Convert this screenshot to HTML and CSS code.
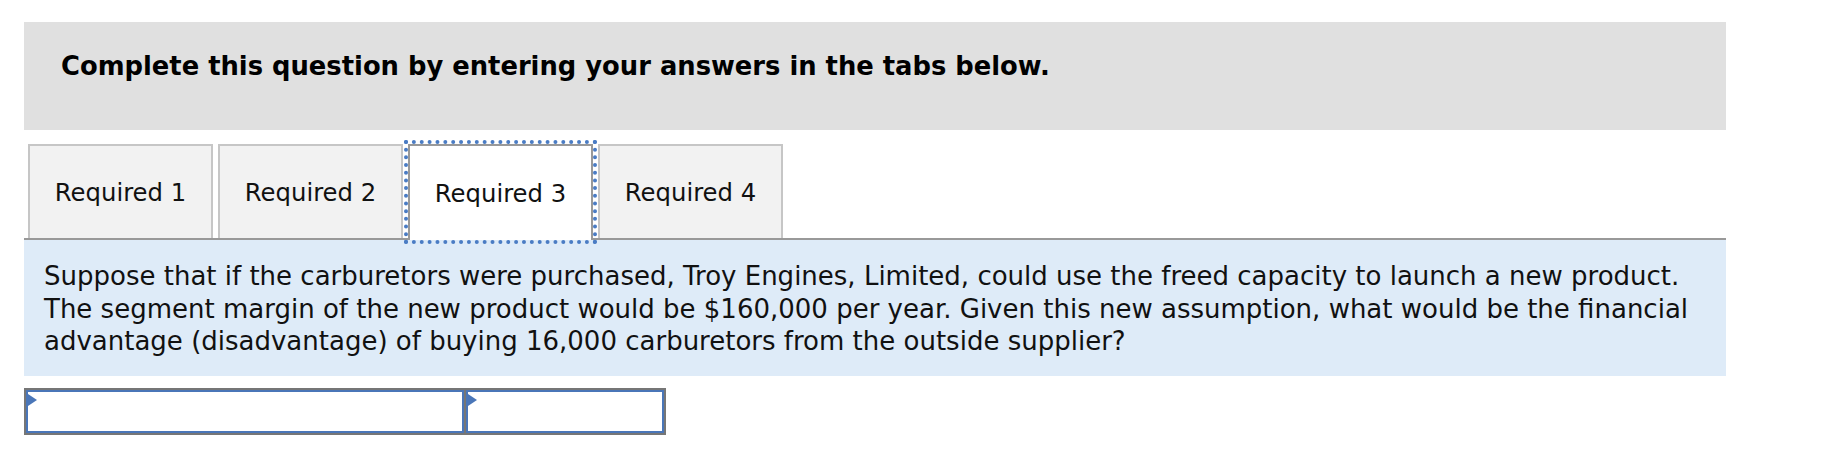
FILE: index.html
```html
<!DOCTYPE html>
<html>
<head>
<meta charset="utf-8">
<link rel="stylesheet" href="styles.css">
</head>
<body>
<div class="page">
  <div class="banner">Complete this question by entering your answers in the tabs below.</div>
  <div class="tabs">
    <div class="tab">Required 1</div>
    <div class="tab">Required 2</div>
    <div class="tab active">Required 3</div>
    <div class="tab">Required 4</div>
  </div>
  <div class="question">Suppose that if the carburetors were purchased, Troy Engines, Limited, could use the freed capacity to launch a new product. The segment margin of the new product would be $160,000 per year. Given this new assumption, what would be the financial advantage (disadvantage) of buying 16,000 carburetors from the outside supplier?</div>
  <div class="answer">
    <div class="cell wide"><span class="flag"></span></div>
    <div class="cell narrow"><span class="flag"></span></div>
  </div>
</div>
</body>
</html>
```

FILE: styles.css
```css
html, body {
  margin: 0;
  padding: 0;
  background: #ffffff;
}
.page {
  padding: 22px 0 0 24px;
  width: 1702px;
  font-family: "DejaVu Sans", sans-serif;
  color: #111;
}
.banner {
  background: #e0e0e0;
  height: 108px;
  box-sizing: border-box;
  padding: 27px 0 0 37px;
  font-family: "DejaVu Sans", sans-serif;
  font-weight: bold;
  font-size: 25.8px;
  line-height: 34px;
  color: #000;
}
.tabs {
  display: flex;
  gap: 5px;
  margin-top: 14px;
  padding-left: 4px;
  border-bottom: 2px solid #999;
  height: 94px;
}
.tab {
  width: 185px;
  box-sizing: border-box;
  height: 94px;
  background: #f2f2f2;
  border: 2px solid #c6c6c6;
  border-bottom: none;
  display: flex;
  align-items: center;
  justify-content: center;
  font-size: 24.3px;
  color: #111;
}
.tab.active {
  background: #fff;
  border-color: #999;
  height: 96px;
  outline: 4px dotted #4a7cc4;
  outline-offset: 0;
  position: relative;
  z-index: 1;
}
.question {
  background: #deebf8;
  padding: 20px 20px 18px 20px;
  font-size: 26px;
  line-height: 32.6px;
  color: #111;
}
.answer {
  display: inline-flex;
  margin-top: 12px;
  border: 2px solid #767676;
  gap: 2px;
  background: #767676;
}
.cell {
  position: relative;
  height: 43px;
  box-sizing: border-box;
  border: 2px solid #4a76b8;
  background: #fff;
}
.cell.wide { width: 438px; }
.cell.narrow { width: 198px; }
.flag {
  position: absolute;
  left: 0;
  top: 2px;
  width: 0;
  height: 0;
  border-top: 6px solid transparent;
  border-bottom: 6px solid transparent;
  border-left: 9px solid #4a76b8;
}
```
